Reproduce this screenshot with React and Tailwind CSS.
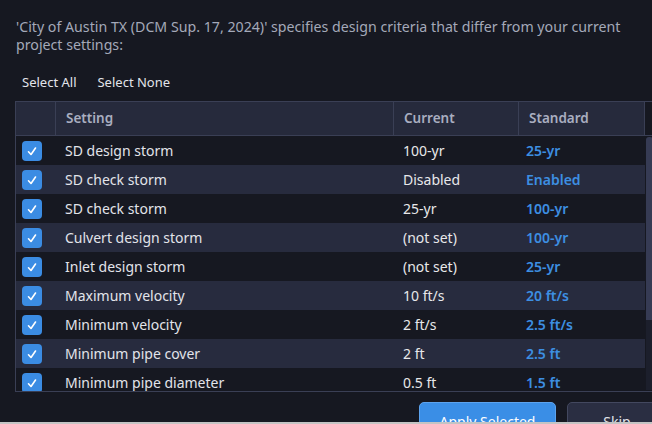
const rows = [
  { name: "SD design storm", current: "100-yr", standard: "25-yr" },
  { name: "SD check storm", current: "Disabled", standard: "Enabled" },
  { name: "SD check storm", current: "25-yr", standard: "100-yr" },
  { name: "Culvert design storm", current: "(not set)", standard: "100-yr" },
  { name: "Inlet design storm", current: "(not set)", standard: "25-yr" },
  { name: "Maximum velocity", current: "10 ft/s", standard: "20 ft/s" },
  { name: "Minimum velocity", current: "2 ft/s", standard: "2.5 ft/s" },
  { name: "Minimum pipe cover", current: "2 ft", standard: "2.5 ft" },
  { name: "Minimum pipe diameter", current: "0.5 ft", standard: "1.5 ft" },
];

function CheckBox() {
  return (
    <div className="flex h-[20px] w-[20px] items-center justify-center rounded-[4px] bg-[#3b8ce3]">
      <svg width="14" height="14" viewBox="0 0 14 14" fill="none">
        <path d="M3.5 7.8 L6 10.5 L10.5 4" stroke="white" strokeWidth="1.6" strokeLinecap="round" strokeLinejoin="round" />
      </svg>
    </div>
  );
}

export default function App() {
  return (
    <div className="flex h-[424px] w-[652px] flex-col overflow-hidden bg-[#161821] font-['Noto_Sans',sans-serif]">
      <div className="flex h-[422px] flex-col overflow-hidden">
        <p className="px-4 pt-[18px] text-[14.2px] leading-[18px] text-[#a4a9b9]">
          'City of Austin TX (DCM Sup. 17, 2024)' specifies design criteria that differ from your current project settings:
        </p>

        <div className="mt-[19px] flex gap-[21px] px-[22px] text-[13px] leading-[18px] text-[#e2e4ea]">
          <span>Select All</span>
          <span>Select None</span>
        </div>

        <div className="ml-[15px] mt-[10px] flex h-[291px] w-[645px] shrink-0 flex-col border border-r-0 border-[#3a3f55]">
          <div className="flex h-[34px] shrink-0 border-b border-[#3a3f55] text-[13.5px] font-semibold text-[#a9aec0]">
            <div className="w-[40px] border-r border-[#3a3f55] bg-[#262a3c]" />
            <div className="flex w-[338px] items-center border-r border-[#3a3f55] bg-[#262a3c] pl-[10px]">Setting</div>
            <div className="flex w-[125px] items-center border-r border-[#3a3f55] bg-[#262a3c] pl-[10px]">Current</div>
            <div className="flex w-[126px] items-center border-r border-[#3a3f55] bg-[#262a3c] pl-[10px]">Standard</div>
          </div>

          <div className="flex min-h-0 flex-1">
            <div className="flex w-[629px] flex-col overflow-hidden">
              {rows.map((r, i) => (
                <div
                  key={i}
                  className={`flex h-[29px] shrink-0 items-center text-[14px] ${i % 2 === 1 ? "bg-[#272b3e]" : "bg-[#161821]"}`}
                >
                  <div className="flex w-[40px] pl-[6px]">
                    <CheckBox />
                  </div>
                  <div className="w-[338px] pl-[9px] text-[#e2e4ea]">{r.name}</div>
                  <div className="w-[125px] pl-[9px] text-[#e8e8ea]">{r.current}</div>
                  <div className="w-[126px] pl-[7px] font-semibold text-[#3d8fe2]">{r.standard}</div>
                </div>
              ))}
            </div>
            <div className="ml-px flex w-[7px] flex-col pt-[1px] pb-[1px]">
              <div className="h-[183px] rounded-t-[3px] bg-[#363b54]" />
              <div className="flex-1 bg-[#1c1f2c]" />
            </div>
          </div>
        </div>

        <div className="mt-[10px] flex gap-[11px] pl-[419px]">
          <button className="h-[38px] w-[137px] shrink-0 rounded-[5px] border border-[#5da3ee] bg-[#3a8ee6] text-[14px] text-white">
            Apply Selected
          </button>
          <button className="h-[38px] w-[100px] shrink-0 rounded-[5px] border border-[#43485f] bg-[#2a2e42] text-[14px] text-[#e2e4ea]">
            Skip
          </button>
        </div>
      </div>
      <div className="h-[2px] bg-[#c4c4c4]" />
    </div>
  );
}
